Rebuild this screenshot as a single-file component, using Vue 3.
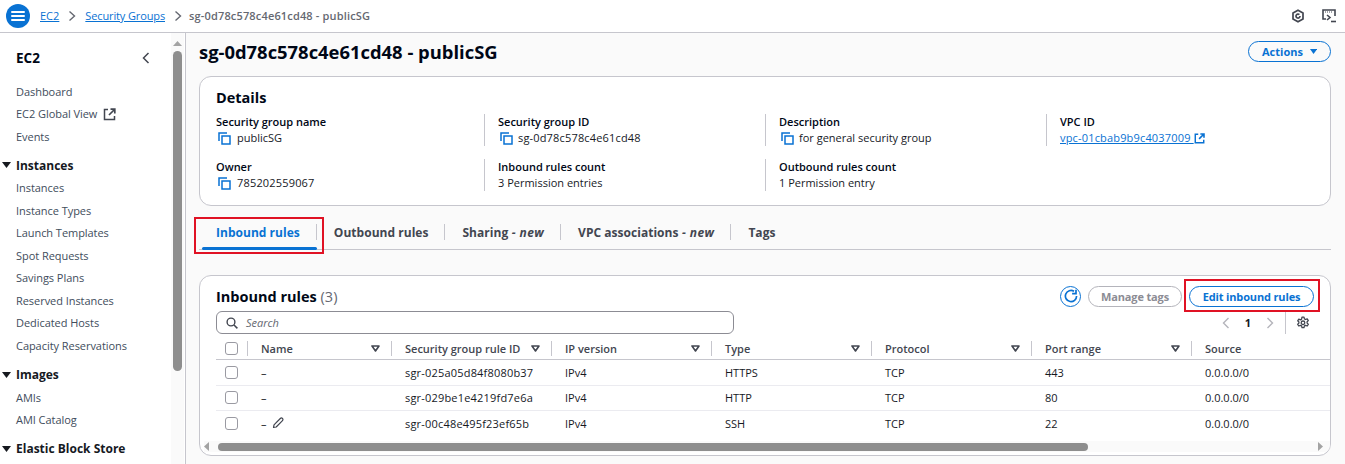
<template>
  <div class="app">
    <header class="topbar">
      <button class="menu-btn" aria-label="Menu">
        <svg width="14" height="12" viewBox="0 0 14 12"><path d="M1 2h12M1 6h12M1 10h12" stroke="#fff" stroke-width="2" stroke-linecap="round" /></svg>
      </button>
      <nav class="crumbs">
        <a class="link">EC2</a>
        <svg class="crumb-sep" width="8" height="12" viewBox="0 0 8 12"><path d="M1.500 1.500 6.500 6l-5 4.500" fill="none" stroke="#656871" stroke-width="1.400" /></svg>
        <a class="link crumb-link">Security Groups</a>
        <svg class="crumb-sep crumb-sep-last" width="8" height="12" viewBox="0 0 8 12"><path d="M1.500 1.500 6.500 6l-5 4.500" fill="none" stroke="#656871" stroke-width="1.400" /></svg>
        <span class="crumb-current">sg-0d78c578c4e61cd48 - publicSG</span>
      </nav>
      <div class="top-icons">
        <svg width="14" height="14" viewBox="0 0 14 14"><path d="M7 1.300 12 4.100v5.800L7 12.700 2 9.900V4.100z" fill="none" stroke="#424650" stroke-width="1.700" /><path d="M9 7a2 2 0 1 1-.6-1.400" fill="none" stroke="#424650" stroke-width="1.700" /></svg>
        <svg width="14" height="14" viewBox="0 0 14 14"><path d="M4 10H1V1h12v6" fill="none" stroke="#424650" stroke-width="1.600" /><path d="M3 3h1M5 3h1M7 3h1M9 3h1" stroke="#424650" /><path d="m5 6 3 2.500-3 2.500" fill="none" stroke="#424650" stroke-width="1.600" /><path d="M9 12.500h5" stroke="#424650" stroke-width="1.600" /></svg>
      </div>
    </header>

    <div class="body">
      <aside class="sidebar">
        <div class="side-content">
          <div class="side-head">
            <span>EC2</span>
            <svg width="8" height="12" viewBox="0 0 8 12"><path d="M6.500 1 1.500 6l5 5" fill="none" stroke="#424650" stroke-width="1.500" /></svg>
          </div>
          <template v-for="group in NAV" :key="group.title">
            <div v-if="group.title !== 'top'" class="side-group">
              <svg width="9" height="6" viewBox="0 0 9 6"><path d="M0 0h9L4.500 6z" fill="#16191f" /></svg>
              <span>{{ group.title }}</span>
            </div>
            <div v-for="item in group.items" :key="group.title + item" class="side-item">
              {{ item }}
              <svg v-if="item === 'EC2 Global View'" class="ext" width="13" height="13" viewBox="0 0 13 13"><path d="M5 1.500H1.500v10h10V8" fill="none" stroke="#424650" stroke-width="1.500" /><path d="M7.500 1.200h4.300v4.300M11.500 1.500 6 7" fill="none" stroke="#424650" stroke-width="1.700" /></svg>
            </div>
          </template>
        </div>
        <div class="side-scroll">
          <svg width="9" height="5" viewBox="0 0 9 5"><path d="M0 5 4.500 0 9 5z" fill="#a3a3a3" /></svg>
          <div class="side-thumb"></div>
        </div>
      </aside>

      <main class="main">
        <div class="title-row">
          <h1>sg-0d78c578c4e61cd48 - publicSG</h1>
          <button class="btn btn-actions">Actions
            <svg width="10" height="7" viewBox="0 0 10 7"><path d="M0 0h10L5 7z" fill="#0972d3" /></svg>
          </button>
        </div>

        <section class="card details">
          <h2>Details</h2>
          <div class="detail-grid">
            <div v-for="col in DETAILS" :key="col[0].label" class="detail-col">
              <div v-for="d in col" :key="d.label" class="detail">
                <div class="detail-label">{{ d.label }}</div>
                <div class="detail-value" :class="{ 'has-id': d.id }">
                  <svg v-if="d.copy" class="copy" width="13" height="13" viewBox="0 0 13 13"><path d="M1 9V1h8" fill="none" stroke="#0972d3" stroke-width="1.500" /><rect x="4" y="4" width="8" height="8" fill="none" stroke="#0972d3" stroke-width="1.500" /></svg>
                  <a v-if="d.link" class="link">{{ d.value }}&nbsp;</a>
                  <span v-else>{{ d.value }}</span>
                  <svg v-if="d.link" class="ext-blue" width="11" height="11" viewBox="0 0 13 13"><path d="M5 1.500H1.500v10h10V8" fill="none" stroke="#0972d3" stroke-width="1.700" /><path d="M7.500 1.200h4.300v4.300M11.500 1.500 6 7" fill="none" stroke="#0972d3" stroke-width="1.900" /></svg>
                </div>
              </div>
            </div>
          </div>
        </section>

        <div class="tabs">
          <div v-for="(t, i) in TABS" :key="t.name" class="tab" :class="{ 'tab-active': i === 0 }">
            <span>{{ t.name }}<em v-if="t.isNew"> - new</em></span>
          </div>
        </div>
        <div class="annot annot-tab"></div>

        <section class="card rules">
          <div class="rules-head">
            <h2>Inbound rules <span class="count">(3)</span></h2>
            <div class="rules-actions">
              <button class="refresh" aria-label="Refresh">
                <svg width="14" height="14" viewBox="0 0 14 14"><path d="M12.600 7A5.600 5.600 0 1 1 10 2.300" fill="none" stroke="#0972d3" stroke-width="1.700" /><path d="M12 .8v3.900H8.100" fill="none" stroke="#0972d3" stroke-width="1.700" /></svg>
              </button>
              <button class="btn btn-disabled">Manage tags</button>
              <button class="btn btn-edit">Edit inbound rules</button>
            </div>
          </div>
          <div class="annot annot-edit"></div>

          <div class="search-row">
            <div class="search">
              <svg width="12" height="12" viewBox="0 0 12 12"><circle cx="5" cy="5" r="3.900" fill="none" stroke="#424650" stroke-width="1.400" /><path d="m8 8 3.400 3.400" stroke="#424650" stroke-width="1.500" /></svg>
              <span>Search</span>
            </div>
            <div class="pager">
              <svg width="8" height="12" viewBox="0 0 8 12"><path d="M6.500 1 1.500 6l5 5" fill="none" stroke="#b4b4bb" stroke-width="1.400" /></svg>
              <b>1</b>
              <svg width="8" height="12" viewBox="0 0 8 12"><path d="M1.500 1l5 5-5 5" fill="none" stroke="#b4b4bb" stroke-width="1.400" /></svg>
              <i class="pager-sep"></i>
              <svg width="14" height="14" viewBox="0 0 14 14"><path d="M6 1.200h2l.4 1.700 1.200.6 1.600-.7 1.100 1.700-1.200 1.200v1.400l1.200 1.200-1.100 1.700-1.600-.7-1.200.6-.4 1.700H6l-.4-1.700-1.200-.6-1.600.7-1.100-1.700 1.200-1.200V6L1.700 4.800l1.100-1.700 1.600.7 1.200-.6z" fill="none" stroke="#424650" stroke-width="1.300" stroke-linejoin="round" /><circle cx="7" cy="6.800" r="1.800" fill="none" stroke="#424650" stroke-width="1.300" /></svg>
            </div>
          </div>

          <div class="table">
            <div class="tr th">
              <div class="c c-check"><i class="box"></i></div>
              <div v-for="h in HEADERS" :key="h.name" class="c" :class="h.cls">
                <span>{{ h.name }}</span>
                <svg v-if="h.sort" width="9" height="7" viewBox="0 0 9 7"><path d="M1 1h7L4.500 6z" fill="none" stroke="#424650" stroke-width="1.600" stroke-linejoin="round" /></svg>
              </div>
            </div>
            <div v-for="(r, i) in ROWS" :key="r[0]" class="tr td" :class="'row' + i">
              <div class="c c-check"><i class="box"></i></div>
              <div class="c c-name">
                <span>–</span>
                <svg v-if="i === 2" class="pencil" width="12" height="12" viewBox="0 0 12 12"><path d="M1.500 10.500 2 7.800 8.300 1.500a1.300 1.300 0 0 1 2.200 2.200L4.200 10z" fill="none" stroke="#424650" stroke-width="1.200" stroke-linejoin="round" /></svg>
              </div>
              <div v-for="(v, j) in r" :key="j" class="c c-std" :class="{ 'c-id': j === 0 }">{{ v }}</div>
            </div>
          </div>

          <div class="hscroll">
            <svg width="5" height="9" viewBox="0 0 5 9"><path d="M5 0 0 4.500 5 9z" fill="#a3a3a3" /></svg>
            <div class="hthumb"></div>
            <svg class="hright" width="5" height="9" viewBox="0 0 5 9"><path d="M0 0l5 4.500L0 9z" fill="#a3a3a3" /></svg>
          </div>
        </section>
      </main>
    </div>
  </div>
</template>

<script setup>
const NAV = [
  { title: 'top', items: ['Dashboard', 'EC2 Global View', 'Events'] },
  { title: 'Instances', items: ['Instances', 'Instance Types', 'Launch Templates', 'Spot Requests', 'Savings Plans', 'Reserved Instances', 'Dedicated Hosts', 'Capacity Reservations'] },
  { title: 'Images', items: ['AMIs', 'AMI Catalog'] },
  { title: 'Elastic Block Store', items: [] },
];

const DETAILS = [
  [
    { label: 'Security group name', value: 'publicSG', copy: true },
    { label: 'Owner', value: '785202559067', copy: true, id: true },
  ],
  [
    { label: 'Security group ID', value: 'sg-0d78c578c4e61cd48', copy: true, id: true },
    { label: 'Inbound rules count', value: '3 Permission entries' },
  ],
  [
    { label: 'Description', value: 'for general security group', copy: true },
    { label: 'Outbound rules count', value: '1 Permission entry' },
  ],
  [
    { label: 'VPC ID', value: 'vpc-01cbab9b9c4037009', link: true, id: true },
  ],
];

const TABS = [
  { name: 'Inbound rules' },
  { name: 'Outbound rules' },
  { name: 'Sharing', isNew: true },
  { name: 'VPC associations', isNew: true },
  { name: 'Tags' },
];

const HEADERS = [
  { name: 'Name', cls: 'c-name', sort: true },
  { name: 'Security group rule ID', cls: 'c-std', sort: true },
  { name: 'IP version', cls: 'c-std', sort: true },
  { name: 'Type', cls: 'c-std', sort: true },
  { name: 'Protocol', cls: 'c-std', sort: true },
  { name: 'Port range', cls: 'c-std', sort: true },
  { name: 'Source', cls: 'c-std' },
];

const ROWS = [
  ['sgr-025a05d84f8080b37', 'IPv4', 'HTTPS', 'TCP', '443', '0.0.0.0/0'],
  ['sgr-029be1e4219fd7e6a', 'IPv4', 'HTTP', 'TCP', '80', '0.0.0.0/0'],
  ['sgr-00c48e495f23ef65b', 'IPv4', 'SSH', 'TCP', '22', '0.0.0.0/0'],
];
</script>

<style>
html, body { margin: 0; background: #fafafa; }
</style>

<style scoped>
* { box-sizing: border-box; }
.app { width: 1345px; height: 464px; overflow: hidden; font-family: "Open Sans", sans-serif; font-size: 11px; color: #16191f; background: #fafafa; display: flex; flex-direction: column; }
h1, h2 { margin: 0; }
button { font-family: inherit; cursor: pointer; }
.link { color: #0972d3; text-decoration: underline; }

.topbar { height: 33px; flex: none; display: flex; align-items: center; padding: 0 9px 1px 6px; background: #fff; border-bottom: 1px solid #c6c6cd; }
.menu-btn { width: 24px; height: 24px; border: none; border-radius: 50%; background: #0972d3; padding: 0; display: flex; align-items: center; justify-content: center; }
.crumbs { display: flex; align-items: center; margin-left: 10px; }
.crumb-sep { margin: 0 9px; }
.crumb-link { letter-spacing: -.13px; }
.crumb-sep-last { margin-right: 7px; }
.crumb-current { color: #656871; font-weight: 600; letter-spacing: .16px; }
.top-icons { margin-left: auto; display: flex; gap: 17px; }

.body { flex: 1; display: flex; min-height: 0; }
.sidebar { width: 186px; flex: none; display: flex; background: #fff; border-right: 1px solid #c6c6cd; overflow: hidden; }
.side-content { width: 170px; padding-left: 16px; flex: none; }
.side-head { display: flex; align-items: center; justify-content: space-between; padding: 2px 20px 0 0; height: 47.500px; font-size: 13.500px; font-weight: 700; color: #000716; }
.side-item { height: 22.500px; line-height: 22.500px; color: #414d5c; white-space: nowrap; display: flex; align-items: center; letter-spacing: -.05px; }
.ext { margin-left: 6px; }
.side-group { height: 24px; margin: 5.300px 0 0 -14px; display: flex; align-items: center; gap: 5px; font-size: 12px; font-weight: 700; color: #16191f; white-space: nowrap; }
.side-scroll { margin-left: 1px; width: 13px; background: #fafafa; display: flex; flex-direction: column; align-items: center; padding-top: 8px; }
.side-thumb { width: 9px; height: 320px; margin-top: 5px; background: #8e8e8e; border-radius: 5px; }

.main { flex: 1; min-width: 0; padding: 0 14px 0 13px; position: relative; }
.title-row { display: flex; align-items: center; justify-content: space-between; height: 43px; padding-bottom: 6px; }
h1 { font-size: 18.400px; font-weight: 700; color: #000716; }
.btn { border-radius: 12px; background: transparent; font-size: 11px; font-weight: 700; height: 21px; padding: 0 13px; display: inline-flex; align-items: center; white-space: nowrap; }
.btn-actions { border: 1px solid #0972d3; color: #0972d3; gap: 7px; width: 83px; margin-bottom: 1px; }
.card { background: #fff; border: 1px solid #c6c6cd; border-radius: 12px; }
.details { height: 130px; padding: 11px 16px 0; }
.details h2 { font-size: 14.500px; font-weight: 700; color: #000716; line-height: 20px; }
.detail-grid { display: grid; grid-template-columns: 268px 281px 281px 1fr; margin-top: 6px; }
.detail { height: 32px; margin-bottom: 13px; padding-left: 13px; border-left: 1px solid #c6c6cd; }
.detail-col:first-child .detail { padding-left: 0; border-left: none; }
.detail-col:first-child .copy { margin-right: 6px; }
.detail-label { font-weight: 600; color: #000716; line-height: 16px; }
.detail-value { display: flex; align-items: center; line-height: 16px; color: #16191f; }
.has-id { letter-spacing: .17px; }
.copy { margin: 0 5px 0 2px; }

.tabs { display: flex; height: 35px; margin-top: 9px; border-bottom: 1px solid #c6c6cd; }
.tab { font-size: 12px; font-weight: 700; color: #424650; padding: 0 17px; display: flex; align-items: center; position: relative; height: 34px; white-space: nowrap; letter-spacing: .03px; }
.tab:not(:last-child)::after { content: ""; position: absolute; right: 0; top: 9px; height: 16px; border-right: 1px solid #c6c6cd; }
.tab-active { color: #0972d3; }
.tab-active::before { content: ""; position: absolute; left: 3px; right: 0; bottom: -1px; height: 3px; border-radius: 2px; background: #0972d3; }
.tab em { font-style: italic; letter-spacing: .4px; }
.annot { position: absolute; border: 2px solid #e01224; pointer-events: none; }
.annot-tab { left: 8px; top: 184px; width: 130px; height: 37px; }
.annot-edit { left: 984px; top: 3px; width: 136px; height: 33px; }

.rules { position: relative; margin-top: 25px; height: 181px; padding: 0 0 0 16px; overflow: hidden; }
.rules-head { display: flex; align-items: center; justify-content: space-between; height: 35px; padding: 5px 16px 0 0; }
.rules-head h2 { font-size: 14.500px; font-weight: 700; color: #000716; }
.count { font-weight: 400; color: #656871; }
.rules-actions { display: flex; align-items: center; gap: 7px; }
.refresh { width: 21px; height: 21px; border-radius: 50%; border: 1px solid #0972d3; background: #fff; padding: 0; display: flex; align-items: center; justify-content: center; }
.btn-disabled { border: 1px solid #b4b4bb; color: #8c8c94; width: 94px; justify-content: center; letter-spacing: -.15px; }
.btn-edit { border: 1px solid #0972d3; color: #0972d3; width: 125px; justify-content: center; letter-spacing: -.15px; }
.search-row { display: flex; align-items: center; justify-content: space-between; padding-right: 20px; height: 23px; }
.search { width: 518px; height: 23px; border: 1px solid #8c8c94; border-radius: 6px; display: flex; align-items: center; gap: 8px; padding-left: 9px; color: #656871; font-style: italic; }
.pager { display: flex; align-items: center; gap: 15px; }
.pager b { font-weight: 700; }
.pager-sep { width: 1px; height: 22px; background: #c6c6cd; margin: 0 -5px 0 -4px; }

.table { margin-top: 4px; }
.tr { display: flex; background: #fff; }
.th { height: 22px; border-bottom: 1px solid #c6c6cd; font-weight: 600; color: #424650; }
.td { height: 25.500px; border-bottom: 1px solid #ebebf0; }
.row2 { border-bottom: none; height: 28.500px; padding-bottom: 4.500px; }
.c { flex: none; display: flex; align-items: center; padding: 0 14px; position: relative; justify-content: space-between; white-space: nowrap; }
.c-check { width: 31px; padding: 0 0 0 9px; }
.c-name { width: 144px; justify-content: flex-start; }
.th .c-name, .th .c-std { justify-content: space-between; padding-right: 11px; }
.c-std { width: 160px; justify-content: flex-start; }
.c-id { letter-spacing: .19px; }
.th .c-check::after, .th .c-name::after, .th .c-std::after { content: ""; position: absolute; right: -1px; top: 3px; height: 15px; border-right: 1px solid #c6c6cd; }
.box { width: 13px; height: 13px; border: 1px solid #9a9aa2; border-radius: 3px; display: block; }
.pencil { margin-left: 5px; }
.hscroll { display: flex; align-items: center; height: 11px; margin: 1.500px 0 0 -12px; padding-right: 7px; background: #fafafa; }
.hthumb { width: 870px; height: 8px; margin-left: 9px; border-radius: 4px; background: #8e8e8e; }
.hright { margin-left: auto; }
</style>
